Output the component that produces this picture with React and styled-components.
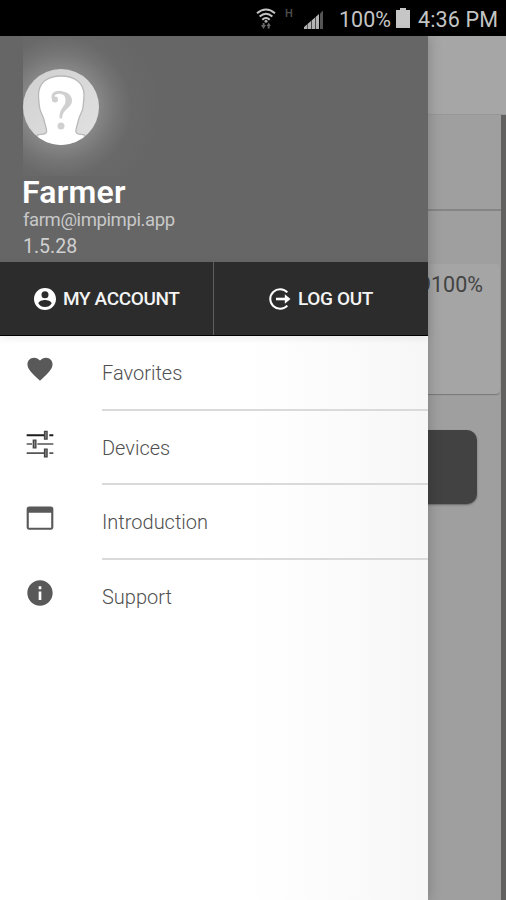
import styled, { createGlobalStyle } from 'styled-components';

const menuItems = [
	{ name: 'Favorites', icon: 'heart', height: 75 },
	{ name: 'Devices', icon: 'sliders', height: 74 },
	{ name: 'Introduction', icon: 'window', height: 75 },
	{ name: 'Support', icon: 'info', height: 75 },
];

const icons = {
	heart: (
		<path
			fill="#595959"
			d="M12 20.800l-1.400-1.300C5.600 15 2.600 12 2.600 8.500 2.600 5.600 4.700 3.500 7.500 3.500c1.700 0 3.400.8 4.500 2.200 1.100-1.400 2.800-2.200 4.500-2.200 2.800 0 4.900 2.100 4.900 5 0 3.500-3 6.500-8 11L12 20.800z"
		/>
	),
	sliders: (
		<>
			<path stroke="#1c1c1c" strokeWidth="1.5" d="M2 5.400h14.500M19 5.400h3" />
			<path stroke="#555" strokeWidth="1.3" d="M2 12h4M10 12h12M2 18.800h14.500M19 18.800h3" />
			<path
				fill="#888"
				stroke="#444"
				strokeWidth="1"
				d="M15.400 2.500h1.900v5.800h-1.900zM7 9.100h1.900v5.800H7zM15.400 15.900h1.900v5.800h-1.900z"
			/>
		</>
	),
	window: (
		<path
			fill="#595959"
			fillRule="evenodd"
			d="M20.200 3.300H3.800C2.800 3.300 2 4 2 5v14c0 1 .8 1.800 1.800 1.800h16.400c1 0 1.800-.8 1.800-1.800V5c0-1-.8-1.700-1.800-1.700zm.2 16H3.600V8h16.800v11.300z"
		/>
	),
	info: (
		<path
			fill="#595959"
			d="M12 2.500C6.700 2.500 2.500 6.700 2.500 12s4.200 9.500 9.500 9.500 9.500-4.200 9.500-9.500S17.300 2.500 12 2.500zm1 14.700h-2v-6.400h2v6.400zm0-8h-2V7h2v2.200z"
		/>
	),
};

const App = () => (
	<>
		<GlobalStyle />
		<Screen>
			<StatusBar>
				<WifiIcon viewBox="0 0 20 22">
					<g fill="none" stroke="#c4c4c4" strokeWidth="2">
						<path d="M1 5.200Q10-2.200 19 5.200" />
						<path d="M3.600 8.600Q10 3 16.400 8.600" />
						<path d="M6.300 11.800Q10 8.300 13.700 11.800" />
					</g>
					<circle cx="10" cy="13.200" r="1.5" fill="#aaa" />
					<path fill="#666" d="M5 17h1.600v-2h2v2H10l-2.500 4zM10.500 18l2.200-3.500 2.200 3.500h-1.200v2.500h-2V18z" />
				</WifiIcon>
				<Network>H</Network>
				<SignalIcon viewBox="0 0 20 20">
					<path fill="#b4b4b4" d="M0 19v-2l3-2.500V19zM3.500 19v-5l3.500-3v8zM7.600 19v-8.500l3.400-3V19zM11.600 19V7L15 4v15z" />
					<path fill="#555" d="M16 19V3.500L19 .5V19z" />
				</SignalIcon>
				<Percent>100%</Percent>
				<BatteryIcon viewBox="0 0 14 20">
					<path fill="#c6c6c6" d="M0 2h4V0h6v2h4v18H0z" />
				</BatteryIcon>
				<Clock>4:36 PM</Clock>
			</StatusBar>

			<Page>
				<Toolbar />
				<Body>
					<Content>
						<Tabs />
						<DeviceCard>
							<Level>9100%</Level>
						</DeviceCard>
						<BigButton />
					</Content>
					<ScrollEdge />
				</Body>
			</Page>

			<Drawer>
				<Profile>
					<Glow>
						<Avatar viewBox="0 0 76 76">
							<defs>
								<clipPath id="face">
									<circle cx="38" cy="38" r="38" />
								</clipPath>
								<linearGradient id="shade" x1="0" y1="0" x2="1" y2="1">
									<stop offset="0" stopColor="#d0d0d0" />
									<stop offset="1" stopColor="#e2e2e2" />
								</linearGradient>
							</defs>
							<g clipPath="url(#face)">
								<rect width="76" height="76" fill="url(#shade)" />
								<path
									fill="#fff"
									stroke="#b8b8b8"
									strokeWidth="1.3"
									d="M38 7C24 7 15.500 14 15.500 26c0 4 .5 8 1 12 .5 5 3.500 8 4.500 13 1 5 3 8 2.500 12-1 3-5 2-9 3v14h47V66c-4-1-8 0-8.500-3-.5-4 1.500-7 2.500-12s4-8 4.500-13c.5-4 1-8 1-12C61 14 52 7 38 7z"
								/>
							</g>
							<path fill="none" stroke="#d0d0d0" strokeWidth="3" d="M31 31.500C27 24 35 21.500 41 24.500" />
							<path
								fill="#d0d0d0"
								d="M38 22.500c7 0 11 4 11 9 0 8-9.500 8-10 18h-2.500c-.5-11 6-11 6-18 0-4-1.500-6.500-5-6.500z"
							/>
							<circle cx="32" cy="30.500" r="3" fill="#d0d0d0" />
							<circle cx="38" cy="57" r="3.500" fill="#d0d0d0" />
						</Avatar>
					</Glow>
					<UserName>Farmer</UserName>
					<Email>farm@impimpi.app</Email>
					<Version>1.5.28</Version>
				</Profile>

				<Actions>
					<Action $divided $padding={33}>
						<ActionIcon viewBox="0 0 24 24">
							<path
								fill="#fff"
								d="M12 1C5.900 1 1 5.900 1 12s4.900 11 11 11 11-4.900 11-11S18.100 1 12 1zm0 3.300a3.500 3.500 0 110 7 3.500 3.500 0 010-7zm0 15.700c-2.800 0-5.200-1.400-6.600-3.600.1-2.100 4.400-3.300 6.600-3.300s6.500 1.200 6.600 3.300C17.200 18.600 14.800 20 12 20z"
							/>
						</ActionIcon>
						<ActionText>MY ACCOUNT</ActionText>
					</Action>
					<Action $padding={54}>
						<ActionIcon viewBox="0 0 24 24">
							<g fill="none" stroke="#fff" strokeWidth="2">
								<path d="M19.300 5.400a9.800 9.800 0 100 13.200" />
								<path d="M8 12h10" strokeWidth="2.6" />
							</g>
							<path fill="#fff" d="M16.800 7.200l5.700 4.800-5.700 4.800z" />
						</ActionIcon>
						<ActionText>LOG OUT</ActionText>
					</Action>
				</Actions>

				<Menu>
					{menuItems.map(({ name, icon, height }) => (
						<MenuItem key={name} $height={height}>
							<MenuIcon viewBox="0 0 24 24">{icons[icon]}</MenuIcon>
							<MenuLabel $last={name === 'Support'}>{name}</MenuLabel>
						</MenuItem>
					))}
				</Menu>
			</Drawer>
		</Screen>
	</>
);

export default App;

const GlobalStyle = createGlobalStyle`
	* {
		box-sizing: border-box;
	}

	body {
		margin: 0;
		font-family: Roboto, sans-serif;
	}
`;

const Screen = styled.div`
	position: relative;
	display: flex;
	flex-direction: column;
	width: 506px;
	height: 900px;
	overflow: hidden;
	background: #9f9f9f;
`;

const StatusBar = styled.header`
	display: flex;
	align-items: center;
	flex: 0 0 36px;
	padding: 3px 0 0 256px;
	background: #000;
	color: #c4c4c4;
	font-size: 21.5px;
	line-height: 33px;
	white-space: nowrap;
`;

const WifiIcon = styled.svg`
	width: 20px;
	height: 22px;
	margin-top: -2px;
`;

const Network = styled.span`
	width: 8px;
	margin: -12px 0 0 9px;
	color: #505050;
	font-size: 11px;
	font-weight: 500;
`;

const SignalIcon = styled.svg`
	width: 20px;
	height: 20px;
	margin-left: 11px;
`;

const Percent = styled.span`
	width: 53px;
	margin-left: 15px;
`;

const BatteryIcon = styled.svg`
	width: 14px;
	height: 20px;
	margin: -3px 8px 0 4px;
`;

const Clock = styled.span`
	letter-spacing: 0.15px;
`;

const Page = styled.main`
	display: flex;
	flex: 1;
	flex-direction: column;
`;

const Toolbar = styled.div`
	flex: 0 0 79px;
	border-bottom: 1px solid #979797;
	background: #a6a6a6;
`;

const Body = styled.div`
	display: flex;
	flex: 1;
`;

const Content = styled.div`
	display: flex;
	flex: 1;
	flex-direction: column;
`;

const Tabs = styled.div`
	height: 96px;
	border-bottom: 2px solid #858585;
`;

const DeviceCard = styled.section`
	display: flex;
	justify-content: flex-end;
	height: 130px;
	margin: 53px 1px 0 0;
	padding: 6px 17px 0 0;
	border-radius: 4px;
	background: #a5a5a5;
	box-shadow: 0 1px 1px #777;
`;

const Level = styled.span`
	color: #434343;
	font-size: 21.5px;
	line-height: 30px;
`;

const BigButton = styled.div`
	height: 74px;
	margin: 36px 24px 0;
	border-radius: 10px;
	background: #424242;
	box-shadow: 0 1px 2px #666;
`;

const ScrollEdge = styled.div`
	width: 5px;
	background: #63615f;
`;

const Drawer = styled.aside`
	position: absolute;
	top: 36px;
	bottom: 0;
	left: 0;
	display: flex;
	flex-direction: column;
	width: 428px;
	background: linear-gradient(90deg, #fff 250px, #f7f7f7 428px);
	box-shadow: 1px 0 12px rgba(0, 0, 0, 0.2);
`;

const Profile = styled.div`
	display: flex;
	flex-direction: column;
	align-items: flex-start;
	height: 226px;
	padding-left: 23px;
	background: #666;
	white-space: nowrap;
`;

const Glow = styled.div`
	width: 150px;
	height: 140px;
	padding-top: 33px;
	background: radial-gradient(circle at 38px 71px, #868686 38px, #747474 55px, #696969 70px, #666 100px);
`;

const Avatar = styled.svg`
	display: block;
	width: 76px;
	height: 76px;
`;

const UserName = styled.h1`
	margin: 0 0 0 -1px;
	color: #fff;
	font-size: 32px;
	font-weight: 600;
	letter-spacing: 0.25px;
	line-height: 33px;
`;

const Email = styled.div`
	color: #c8c8c8;
	font-size: 18.5px;
	letter-spacing: -0.4px;
	line-height: 22px;
`;

const Version = styled.div`
	margin-top: 4px;
	color: #d0d0d0;
	font-size: 19.5px;
	line-height: 24px;
`;

const Actions = styled.div`
	display: grid;
	grid-template-columns: 214px 214px;
	height: 74px;
	border-bottom: 1px solid #000;
	background: #2c2c2c;
	box-shadow: 0 2px 8px rgba(0, 0, 0, 0.08);
`;

const Action = styled.div`
	display: flex;
	align-items: center;
	gap: 6px;
	padding-left: ${({ $padding }) => $padding}px;
	border-right: ${({ $divided }) => ($divided ? '1px solid #606060' : 'none')};
`;

const ActionIcon = styled.svg`
	width: 24px;
	height: 24px;
`;

const ActionText = styled.span`
	color: #f4f4f4;
	font-size: 19px;
	font-weight: 500;
	letter-spacing: -0.37px;
	line-height: 24px;
	white-space: nowrap;
`;

const Menu = styled.nav`
	display: flex;
	flex-direction: column;
`;

const MenuItem = styled.div`
	display: flex;
	height: ${({ $height }) => $height}px;
	padding-left: 24px;
`;

const MenuIcon = styled.svg`
	width: 32px;
	height: 32px;
	margin: 17px 46px 0 0;
`;

const MenuLabel = styled.span`
	flex: 1;
	border-bottom: ${({ $last }) => ($last ? 'none' : '2px solid #dadada')};
	color: #505050;
	font-size: 20px;
	font-weight: 300;
	line-height: 75px;
`;
